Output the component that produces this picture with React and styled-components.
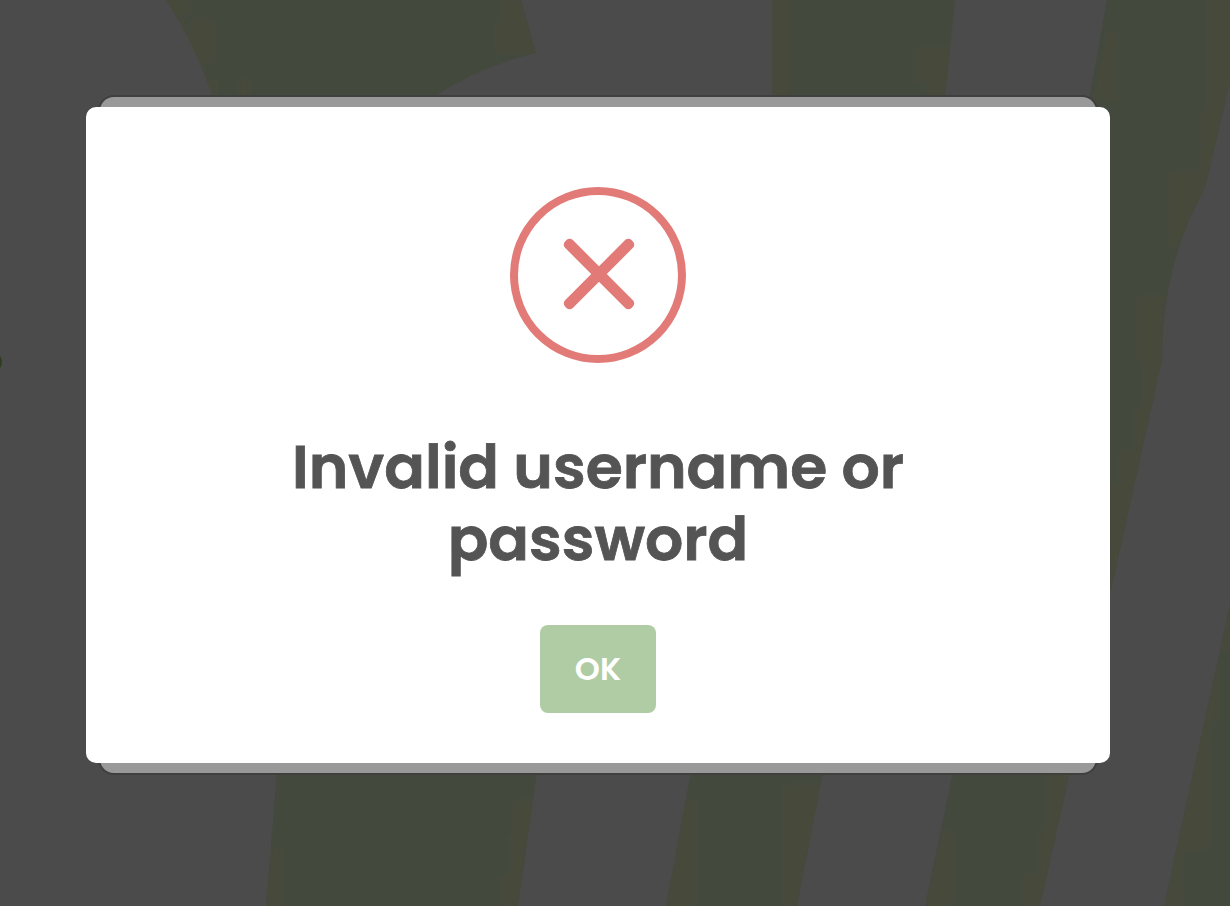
import React from "react";
import styled, { createGlobalStyle } from "styled-components";

const GlobalStyle = createGlobalStyle`
  *, *::before, *::after { box-sizing: border-box; }
  html, body { margin: 0; padding: 0; overflow: hidden; background: #4b4b4b; }
`;

const Page = styled.main`
  position: relative;
  width: 1230px;
  height: 906px;
  overflow: hidden;
  background: #4b4b4b;
  font-family: "Poppins", "Inter", "Liberation Sans", sans-serif;
`;

const Backdrop = styled.svg`
  position: absolute;
  inset: 0;
  display: block;
`;

const Overlay = styled.div`
  position: relative;
  width: 100%;
  padding: 97px 134px 0 100px;
`;

const LoginCard = styled.div`
  height: 676px;
  padding: 10px 0;
  border-radius: 14px;
  background: #999;
  box-shadow: 0 0 0 2px #3f3f3e;
`;

const Dialog = styled.section`
  display: flex;
  flex-direction: column;
  align-items: center;
  height: 656px;
  margin: 0 -14px;
  padding-top: 80px;
  border-radius: 10px;
  background: #fff;
`;

const ErrorIcon = styled.svg`
  display: block;
  flex: none;
`;

const Title = styled.h2`
  width: 800px;
  margin: 68px 0 0;
  color: #545454;
  font-size: 60px;
  font-weight: 600;
  line-height: 72px;
  text-align: center;
  -webkit-text-stroke: 0.8px #545454;
`;

const ConfirmButton = styled.button`
  width: 116px;
  height: 88px;
  margin: 50px 0 0;
  padding: 0;
  border: 0;
  border-radius: 8px;
  background: #b0cca4;
  color: #fff;
  font: 600 32px/88px "Poppins", "Inter", "Liberation Sans", sans-serif;
`;

const SHAPES = [
  "M166 0Q196 46 213 98H432Q480 66 536 53L521 0Z",
  "M772 0H955L945 98H772Z",
  "M1107 0H1230V82L1207 180Q1205 187 1202 194Q1162 268 1162 360L1111 590H1080V150Z",
  "M277 772H537L518 906H266Z",
  "M691 772H823L797 906H666Z",
  "M953 772H1070L1040 906H925Z",
  "M1230 604V906H1164L1190 787Z",
];

const TINTS = [
  "M166 0H188V14H178L192 40V20H213V62H202V80H215V98H180Z",
  "M503 0H521L536 53H497V22H503Z",
  "M238 80H250V98H238Z",
  "M772 0H786V98H772Z",
  "M916 48H950L945 98H928V82H916Z",
  "M1107 32H1117V98H1094Z",
  "M1209 0H1230V82L1207 180L1202 194L1176 248H1171V172H1203V112H1209Z",
  "M1139 295H1164L1162 360L1111 590V485H1120V450H1134V408H1145V360H1139Z",
  "M273 848H282V906H266Z",
  "M515 800H533L518 906H503V875H510V835H515Z",
  "M686 800L695 800V906H666Z",
  "M785 785H821L797 906H785Z",
  "M943 830H953V906H925Z",
  "M1048 772H1070L1040 906H1024V875H1038V830H1048Z",
  "M1230 604V650H1218V720H1209V850H1180V906H1164L1190 787Z",
];

export default function App() {
  return (
    <>
      <GlobalStyle />
      <Page>
        <Backdrop width="1230" height="906" viewBox="0 0 1230 906" aria-hidden="true">
          <defs>
            <clipPath id="lettering">
              {SHAPES.map((d) => <path key={d} d={d} />)}
            </clipPath>
            <filter id="soften"><feGaussianBlur stdDeviation="1.5" /></filter>
          </defs>
          {SHAPES.map((d) => <path key={d} d={d} fill="#44493e" />)}
          <g clipPath="url(#lettering)">
            <g filter="url(#soften)">
              {TINTS.map((d) => <path key={d} d={d} fill="#46493b" />)}
            </g>
          </g>
          <ellipse cx="-1" cy="362" rx="3" ry="6" fill="#2f3e20" />
        </Backdrop>
        <Overlay>
          <LoginCard>
            <Dialog role="dialog" aria-modal="true" aria-labelledby="dialog-title">
              <ErrorIcon width="176" height="176" viewBox="0 0 176 176" aria-hidden="true">
                <circle cx="88" cy="88" r="84" fill="none" stroke="#e27b78" strokeWidth="8" />
                <g fill="#e27b78">
                  <rect x="42" y="81.5" width="94" height="11" rx="4.5" transform="rotate(45 89 87)" />
                  <rect x="42" y="81.5" width="94" height="11" rx="4.5" transform="rotate(-45 89 87)" />
                </g>
              </ErrorIcon>
              <Title id="dialog-title">Invalid username or password</Title>
              <ConfirmButton type="button">OK</ConfirmButton>
            </Dialog>
          </LoginCard>
        </Overlay>
      </Page>
    </>
  );
}
